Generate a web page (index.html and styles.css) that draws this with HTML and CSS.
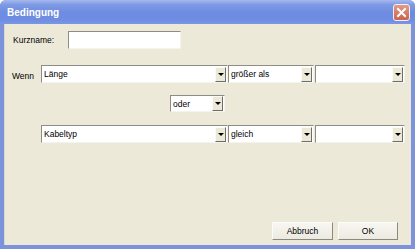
FILE: index.html
```html
<!DOCTYPE html>
<html lang="de">
<head>
    <meta charset="UTF-8">
    <title>Bedingung</title>
    <link rel="stylesheet" href="styles.css">
</head>
<body>

    <div class="window">

        <!-- Title bar -->
        <div class="titlebar">
            <span class="title">Bedingung</span>
            <span class="close-btn">
                <svg width="11" height="11" viewBox="0 0 11 11">
                    <path d="M2 2 L9 9 M9 2 L2 9" stroke="#fff" stroke-width="2" stroke-linecap="square"/>
                </svg>
            </span>
        </div>

        <!-- Dialog content -->
        <div class="content">
            <div class="row row-name">
                <span class="label label-name">Kurzname:</span>
                <div class="textbox"></div>
            </div>

            <div class="row row-wenn">
                <span class="label label-wenn">Wenn</span>
                <div class="combo combo-field"><span class="combo-text">Länge</span><span class="arrow"></span></div>
                <div class="combo combo-op"><span class="combo-text">größer als</span><span class="arrow"></span></div>
                <div class="combo combo-value"><span class="combo-text"></span><span class="arrow"></span></div>
            </div>

            <div class="row row-oder">
                <div class="combo combo-join"><span class="combo-text">oder</span><span class="arrow"></span></div>
            </div>

            <div class="row row-second">
                <div class="combo combo-field"><span class="combo-text">Kabeltyp</span><span class="arrow"></span></div>
                <div class="combo combo-op"><span class="combo-text">gleich</span><span class="arrow"></span></div>
                <div class="combo combo-value"><span class="combo-text"></span><span class="arrow"></span></div>
            </div>

            <div class="spacer"></div>

            <div class="row row-buttons">
                <button class="btn btn-cancel">Abbruch</button>
                <button class="btn btn-ok">OK</button>
            </div>
        </div>

    </div>

</body>
</html>
```

FILE: styles.css
```css
/* General styles */
body {
    margin: 0;
    width: 415px;
    height: 249px;
    overflow: hidden;
    font-family: "Liberation Sans", Arial, sans-serif;
    font-size: 8.5px;
    color: #000;
}

/* Window frame */
.window {
    width: 415px;
    height: 249px;
    box-sizing: border-box;
    display: flex;
    flex-direction: column;
    background-color: #7c93dc;
    border-radius: 6px 6px 0 0;
}

.titlebar {
    height: 24px;
    display: flex;
    align-items: center;
    justify-content: space-between;
    padding: 0 5px 0 7px;
    border-radius: 6px 6px 0 0;
    background: linear-gradient(to bottom, #a6b9ee 0%, #7d99e4 20%, #6d8be0 55%, #6f8de2 85%, #7a96e4 100%);
}

.title {
    color: #fff;
    font-weight: bold;
    font-size: 10px;
    padding-top: 1px;
}

.close-btn {
    width: 15px;
    height: 15px;
    display: flex;
    align-items: center;
    justify-content: center;
    background: linear-gradient(to bottom, #e19a8a, #c9634d);
    border: 1px solid #f3f0ee;
    border-radius: 3px;
    margin-top: 1px;
}

/* Content area */
.content {
    flex: 1;
    display: flex;
    flex-direction: column;
    background-color: #ece9d8;
    margin: 0 4px 4px 4px;
    border-left: 1px solid #dad7cc;
}

.row {
    display: flex;
    align-items: center;
}

.row-name {
    margin-top: 7px;
    padding-left: 8px;
    height: 18px;
}

.label-name {
    width: 55px;
}

.textbox {
    width: 111px;
    height: 16px;
    background-color: #fff;
    border-top: 1px solid #8d8c85;
    border-left: 1px solid #8d8c85;
    border-right: 1px solid #f4f3ee;
    border-bottom: 1px solid #f4f3ee;
}

.row-wenn {
    margin-top: 16px;
    padding-left: 7px;
}

.label-wenn {
    width: 29px;
    padding-top: 4px;
}

/* Combo boxes */
.combo {
    height: 18px;
    box-sizing: border-box;
    display: flex;
    align-items: center;
    background-color: #fff;
    border-top: 1px solid #8d8c85;
    border-left: 1px solid #8d8c85;
    border-right: 1px solid #f4f3ee;
    border-bottom: 1px solid #f4f3ee;
}

.combo-text {
    flex: 1;
    padding-left: 2px;
    white-space: nowrap;
}

.arrow {
    width: 11px;
    height: 15px;
    box-sizing: border-box;
    margin-right: 1px;
    background-color: #ece9d8;
    border-top: 1px solid #fbfaf5;
    border-left: 1px solid #fbfaf5;
    border-right: 1px solid #6e6d68;
    border-bottom: 1px solid #6e6d68;
    position: relative;
}

.arrow::after {
    content: "";
    position: absolute;
    left: 2px;
    top: 5px;
    border-left: 3px solid transparent;
    border-right: 3px solid transparent;
    border-top: 3px solid #000;
}

.combo-field {
    width: 187px;
}

.combo-op {
    width: 86px;
}

.combo-value {
    width: 90px;
    margin-left: 1px;
}

.row-oder {
    margin-top: 12px;
    padding-left: 165px;
}

.combo-join {
    width: 55px;
    height: 17px;
}

.row-second {
    margin-top: 13px;
    padding-left: 36px;
}

.spacer {
    flex: 1;
}

/* Buttons */
.row-buttons {
    justify-content: flex-end;
    gap: 5px;
    padding-right: 13px;
    margin-bottom: 5px;
}

.btn {
    height: 18px;
    font-family: "Liberation Sans", Arial, sans-serif;
    font-size: 8.5px;
    color: #000;
    background: linear-gradient(to bottom, #f7f6f1, #eceae0);
    border-top: 1px solid #fcfcfa;
    border-left: 1px solid #fcfcfa;
    border-right: 1px solid #8a8982;
    border-bottom: 1px solid #8a8982;
    padding: 0;
}

.btn-cancel {
    width: 61px;
}

.btn-ok {
    width: 60px;
}
```
